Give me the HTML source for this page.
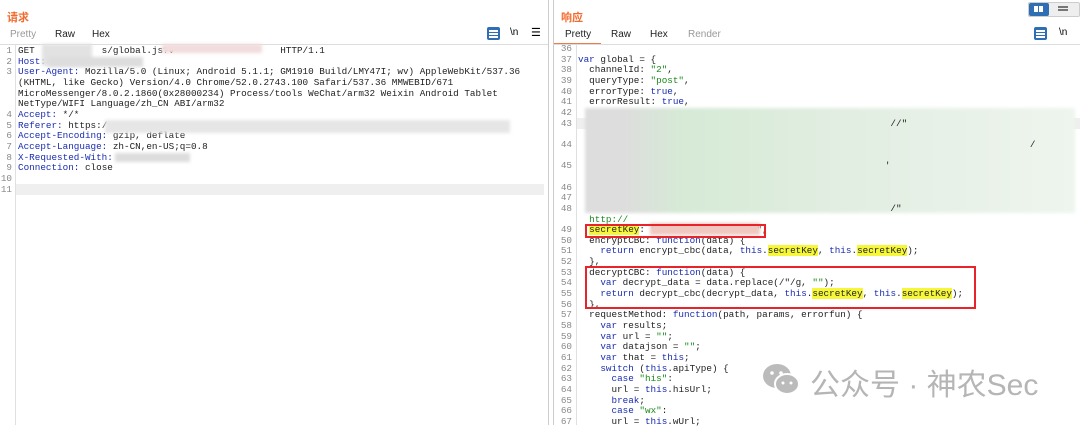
<!DOCTYPE html>
<html><head><meta charset="utf-8"><style>
body{margin:0;width:1080px;height:425px;overflow:hidden;background:#fff;font-family:"Liberation Sans","Noto Sans CJK SC",sans-serif;position:relative}
.abs{position:absolute}
.title{color:#f26b2e;font-weight:bold;font-size:11px}
.tab{font-size:10px;color:#222;position:absolute;top:29px}
.code{font-family:"Liberation Mono",monospace;font-size:9.3px;white-space:pre;color:#222;line-height:10.65px}
.ln{position:absolute;text-align:right;width:12px;color:#888;font-family:"Liberation Mono",monospace;font-size:9.3px;white-space:pre;line-height:10.65px}
.k{color:#1a2db0}.s{color:#1a8a1a}.h{background:#f7f73a}.hd{color:#1a2db0}
.blur{position:absolute;filter:blur(1.5px)}
</style></head><body>
<!-- left panel -->
<div class="abs title" style="left:7px;top:9px">请求</div>
<div class="tab" style="left:10px;color:#999">Pretty</div>
<div class="tab" style="left:55px">Raw</div>
<div class="tab" style="left:92px">Hex</div>
<div class="abs" style="left:487px;top:27px;width:13px;height:13px;background:#2f6db5;border-radius:2px"></div>
<div class="abs" style="left:489px;top:30px;width:9px;height:1.5px;background:#fff;box-shadow:0 3px 0 #fff,0 6px 0 #fff"></div>
<div class="abs" style="left:510px;top:27px;font-size:10px">\n</div>
<div class="abs" style="left:531px;top:26px;font-size:11px">☰</div>
<div class="abs" style="left:0;top:44px;width:548px;height:1px;background:#ddd"></div>
<div class="abs" style="left:15px;top:45px;width:1px;height:380px;background:#e0e0e0"></div>
<div class="abs" style="left:16px;top:184px;width:528px;height:11px;background:#efefef"></div>
<div class="abs" style="left:548px;top:0;width:1px;height:425px;background:#ccc"></div>
<div class="abs" style="left:553px;top:0;width:1px;height:425px;background:#ccc"></div>
<div class="ln" style="left:0;top:46px">1
2
3



4
5
6
7
8
9
10
11</div>
<div class="abs code" style="left:18px;top:46px">GET            s/global.js?v                   HTTP/1.1
<span class="hd">Host:</span>
<span class="hd">User-Agent:</span> Mozilla/5.0 (Linux; Android 5.1.1; GM1910 Build/LMY47I; wv) AppleWebKit/537.36
(KHTML, like Gecko) Version/4.0 Chrome/52.0.2743.100 Safari/537.36 MMWEBID/671
MicroMessenger/8.0.2.1860(0x28000234) Process/tools WeChat/arm32 Weixin Android Tablet
NetType/WIFI Language/zh_CN ABI/arm32
<span class="hd">Accept:</span> */*
<span class="hd">Referer:</span> https:/
<span class="hd">Accept-Encoding:</span> gzip, deflate
<span class="hd">Accept-Language:</span> zh-CN,en-US;q=0.8
<span class="hd">X-Requested-With:</span>
<span class="hd">Connection:</span> close</div>
<div class="blur" style="left:42px;top:44px;width:50px;height:22px;background:#e2e2e2"></div>
<div class="blur" style="left:162px;top:44px;width:100px;height:9px;background:#f2dcdc"></div>
<div class="blur" style="left:48px;top:57px;width:95px;height:10px;background:#ddd"></div>
<div class="blur" style="left:105px;top:120px;width:405px;height:13px;background:#e6e6e6"></div>
<div class="blur" style="left:115px;top:153px;width:75px;height:9px;background:#ddd"></div>
<!-- right panel -->
<div class="abs title" style="left:561px;top:9px">响应</div>
<div class="abs" style="left:1028px;top:2px;width:50px;height:13px;border:1px solid #ccc;background:#eee;border-radius:2px"></div>
<div class="abs" style="left:1029px;top:3px;width:20px;height:13px;background:#2f6db5;border-radius:2px"></div>
<div class="abs" style="left:1034px;top:6px;width:4px;height:6px;background:#fff;box-shadow:5px 0 0 #fff"></div>
<div class="abs" style="left:1058px;top:6px;width:10px;height:2px;background:#777;box-shadow:0 3px 0 #777"></div>
<div class="tab" style="left:565px">Pretty</div>
<div class="tab" style="left:611px">Raw</div>
<div class="tab" style="left:650px">Hex</div>
<div class="tab" style="left:688px;color:#999">Render</div>
<div class="abs" style="left:554px;top:43px;width:47px;height:2px;background:#f07b4a"></div>
<div class="abs" style="left:554px;top:44px;width:526px;height:1px;background:#ddd"></div>
<div class="abs" style="left:1034px;top:27px;width:13px;height:13px;background:#2f6db5;border-radius:2px"></div>
<div class="abs" style="left:1036px;top:30px;width:9px;height:1.5px;background:#fff;box-shadow:0 3px 0 #fff,0 6px 0 #fff"></div>
<div class="abs" style="left:1059px;top:27px;font-size:10px">\n</div>
<div class="abs" style="left:576px;top:45px;width:1px;height:380px;background:#e0e0e0"></div>
<div class="abs" style="left:577px;top:118px;width:503px;height:11px;background:#efefef"></div>
<div class="ln" style="left:560px;top:44px">36
37
38
39
40
41
42
43

44

45

46
47
48

49
50
51
52
53
54
55
56
57
58
59
60
61
62
63
64
65
66
67</div>
<div class="blur" style="left:585px;top:108px;width:490px;height:105px;background:linear-gradient(90deg,#ddd 0,#ddd 8%,#d6ead6 20%,#e4efe4 60%,#eef5ee 100%)"></div>
<div class="abs code" style="left:578px;top:44px">
<span class="k">var</span> global = {
  channelId: <span class="s">"2"</span>,
  queryType: <span class="s">"post"</span>,
  errorType: <span class="k">true</span>,
  errorResult: <span class="k">true</span>,

                                                        //"

                                                                                 /

                                                       '



                                                        /"
  <span class="s">http://</span>
  <span class="h">secretKey</span>: "                 !",
  encryptCBC: <span class="k">function</span>(data) {
    <span class="k">return</span> encrypt_cbc(data, <span class="k">this</span>.<span class="h">secretKey</span>, <span class="k">this</span>.<span class="h">secretKey</span>);
  },
  decryptCBC: <span class="k">function</span>(data) {
    <span class="k">var</span> decrypt_data = data.replace(/"/g, <span class="s">""</span>);
    <span class="k">return</span> decrypt_cbc(decrypt_data, <span class="k">this</span>.<span class="h">secretKey</span>, <span class="k">this</span>.<span class="h">secretKey</span>);
  },
  requestMethod: <span class="k">function</span>(path, params, errorfun) {
    <span class="k">var</span> results;
    <span class="k">var</span> url = <span class="s">""</span>;
    <span class="k">var</span> datajson = <span class="s">""</span>;
    <span class="k">var</span> that = <span class="k">this</span>;
    <span class="k">switch</span> (<span class="k">this</span>.apiType) {
      <span class="k">case</span> <span class="s">"his"</span>:
      url = <span class="k">this</span>.hisUrl;
      <span class="k">break</span>;
      <span class="k">case</span> <span class="s">"wx"</span>:
      url = <span class="k">this</span>.wUrl;</div>
<div class="blur" style="left:650px;top:223px;width:110px;height:12px;background:#f0c8c0"></div>
<div class="abs" style="left:585px;top:224px;width:181px;height:14px;border:2px solid #e8232a;box-sizing:border-box"></div>
<div class="abs" style="left:585px;top:266px;width:391px;height:43px;border:2px solid #e8232a;box-sizing:border-box"></div>
<!-- watermark -->
<svg class="abs" style="left:762px;top:362px" width="40" height="36" viewBox="0 0 40 36"><ellipse cx="15" cy="14" rx="14" ry="12" fill="#bbb"/><ellipse cx="25" cy="22" rx="12" ry="10" fill="#bbb" stroke="#fff" stroke-width="2"/><circle cx="10" cy="11" r="1.8" fill="#fff"/><circle cx="19" cy="11" r="1.8" fill="#fff"/><circle cx="21" cy="21" r="1.5" fill="#fff"/><circle cx="29" cy="21" r="1.5" fill="#fff"/></svg>
<div class="abs" style="left:810px;top:360px;font-size:30px;color:#b5b5b5;font-family:'Liberation Sans','Noto Sans CJK SC',sans-serif;white-space:nowrap">公众号 · 神农Sec</div>
</body></html>
